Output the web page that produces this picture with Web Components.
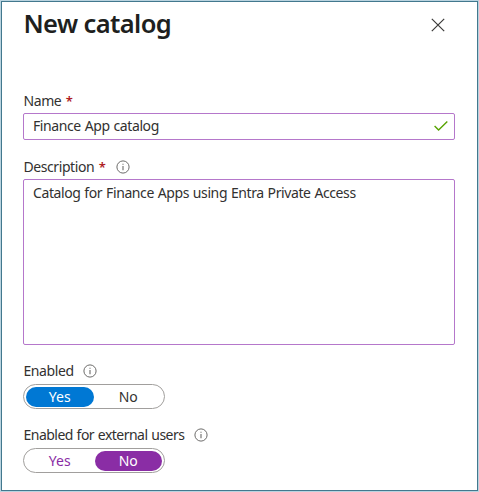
<!DOCTYPE html>
<html lang="en"><head><meta charset="utf-8"><title>New catalog</title>
<style>html,body{margin:0;height:100%;overflow:hidden}body{font:14px "Noto Sans","Open Sans",sans-serif;color:#323130}</style></head>
<body>
<catalog-panel></catalog-panel>
<script>
const define=(name,html,setup)=>customElements.define(name,class extends HTMLElement{
  constructor(){super();this.attachShadow({mode:'open'}).innerHTML=html}
  connectedCallback(){if(setup)setup(this,this.shadowRoot)}
});
define('info-icon',`<style>:host{display:block;width:14px;height:14px}svg{display:block}</style>
<svg width="14" height="14" viewBox="0 0 14 14" fill="none" stroke="#6c6b6a"><circle cx="7" cy="7" r="6.1" stroke-width="1"/><path d="M7 6v4.3M7 3.7v1.1" stroke-width="1.1"/></svg>`);
define('close-icon',`<style>:host{display:block;width:14px;height:14px}svg{display:block}</style>
<svg width="14" height="14" viewBox="0 0 14 14" fill="none" stroke="#3b3a39" stroke-width="1.2"><path d="M.8 .8l12.4 12.4M13.2 .8L.8 13.2"/></svg>`);
define('check-icon',`<style>:host{display:block;width:14px;height:10px}svg{display:block}</style>
<svg width="14" height="10" viewBox="0 0 14 10" fill="none" stroke="#57a300" stroke-width="1.4"><path d="M.6 4.9l4 4L13.3.6"/></svg>`);
define('field-label',`<style>:host{display:flex;align-items:center;height:20px;line-height:20px;white-space:nowrap;letter-spacing:var(--track,-.42px);word-spacing:.6px;padding-left:.5px}
.req{color:#ae1b24;margin:0 1px 0 4.5px;font-size:13px;font-weight:600;letter-spacing:0}info-icon{margin-left:9.5px}[hidden]{display:none}</style>
<slot></slot><span class="req">*</span><info-icon></info-icon>`,(h,r)=>{
  r.querySelector('.req').hidden=!h.hasAttribute('required');
  r.querySelector('info-icon').hidden=!h.hasAttribute('info');
});
define('text-field',`<style>:host{display:flex;justify-content:space-between;box-sizing:border-box;width:432px;height:27px;border:1px solid #b577cb;border-radius:2px;padding:2px 6px 0 9px;line-height:20px;white-space:nowrap;letter-spacing:-.4px;word-spacing:.6px}
:host([multiline]){height:166px;padding-top:3px}
::slotted(check-icon){margin-top:5px}</style><slot></slot><slot name="icon"></slot>`);
define('option-toggle',`<style>:host{display:flex;box-sizing:border-box;width:142px;height:25px;border:1px solid #a19f9d;border-radius:13px;padding:2px;gap:1px;--on:#0078d4;--off:#323130}
:host([modified]){--on:#8a2da5;--off:#8a2da5}
span{flex:1;display:flex;align-items:center;justify-content:center;height:19.5px;border-radius:10px;color:var(--off);line-height:19px}
span.on{background:var(--on);color:#fff}</style><span>Yes</span><span>No</span>`,(h,r)=>{
  r.querySelectorAll('span').forEach(s=>s.classList.toggle('on',s.textContent===h.getAttribute('value')));
});
define('catalog-panel',`<style>:host{display:flex;box-sizing:border-box;width:479px;height:492px;border:1px solid #b9d3df;background:#fff}
main{flex:1;box-sizing:border-box;border:1px solid #42788e;padding:0 21px;display:flex;flex-direction:column}
header{display:flex;justify-content:space-between;height:89px;padding-right:11px}
h1{margin:4px 0 0 .5px;font-size:25.5px;line-height:34px;font-weight:600;letter-spacing:-.6px;color:#201f1e;white-space:nowrap}
close-icon{margin-top:16px}
text-field{margin-top:2px}.desc{margin-top:17px}.en,.ext{margin-top:16px}option-toggle{margin-top:3px}
</style><main>
<header><h1>New catalog</h1><close-icon></close-icon></header>
<field-label required>Name</field-label>
<text-field>Finance App catalog<check-icon slot="icon"></check-icon></text-field>
<field-label class="desc" required info>Description</field-label>
<text-field multiline>Catalog for Finance Apps using Entra Private Access</text-field>
<field-label class="en" info>Enabled</field-label>
<option-toggle value="Yes"></option-toggle>
<field-label class="ext" info style="--track:-.52px">Enabled for external users</field-label>
<option-toggle value="No" modified></option-toggle>
</main>`);
</script></body></html>
